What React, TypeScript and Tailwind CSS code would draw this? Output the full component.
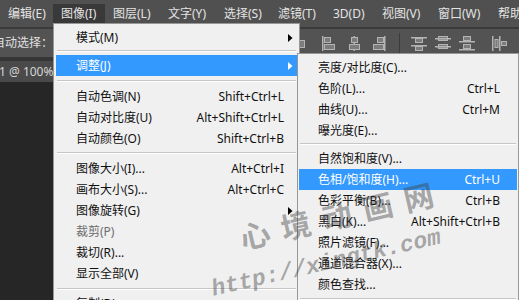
type Item =
  | { sep: string }
  | { t: string; k?: string; sub?: boolean; hi?: boolean; off?: boolean };

const font = "font-['Noto_Sans','Noto_Sans_CJK_SC',sans-serif]";

const topMenu = [
  { t: "编辑(E)", w: "w-[53px]" },
  { t: "图像(I)", w: "w-[52px]", on: true },
  { t: "图层(L)", w: "w-[55px]" },
  { t: "文字(Y)", w: "w-[56px]" },
  { t: "选择(S)", w: "w-[54px]" },
  { t: "滤镜(T)", w: "w-[55px]" },
  { t: "3D(D)", w: "w-[49px]" },
  { t: "视图(V)", w: "w-[56px]" },
  { t: "窗口(W)", w: "w-[60px]" },
  { t: "帮助(H)", w: "w-[60px]" },
];

const mainItems: Item[] = [
  { t: "模式(M)", sub: true },
  { sep: "h-[7px] pt-[2px]" },
  { t: "调整(J)", sub: true, hi: true },
  { sep: "h-[10px] pt-[4px]" },
  { t: "自动色调(N)", k: "Shift+Ctrl+L" },
  { t: "自动对比度(U)", k: "Alt+Shift+Ctrl+L" },
  { t: "自动颜色(O)", k: "Shift+Ctrl+B" },
  { sep: "h-[9px] pt-[3px]" },
  { t: "图像大小(I)...", k: "Alt+Ctrl+I" },
  { t: "画布大小(S)...", k: "Alt+Ctrl+C" },
  { t: "图像旋转(G)", sub: true },
  { t: "裁剪(P)", off: true },
  { t: "裁切(R)..." },
  { t: "显示全部(V)" },
  { sep: "h-[9px] pt-[4px]" },
  { t: "复制(D)..." },
];

const subItems: Item[] = [
  { t: "亮度/对比度(C)..." },
  { t: "色阶(L)...", k: "Ctrl+L" },
  { t: "曲线(U)...", k: "Ctrl+M" },
  { t: "曝光度(E)..." },
  { sep: "h-[7px] pt-[2px]" },
  { t: "自然饱和度(V)..." },
  { t: "色相/饱和度(H)...", k: "Ctrl+U", hi: true },
  { t: "色彩平衡(B)...", k: "Ctrl+B" },
  { t: "黑白(K)...", k: "Alt+Shift+Ctrl+B" },
  { t: "照片滤镜(F)..." },
  { t: "通道混合器(X)..." },
  { t: "颜色查找..." },
  { sep: "h-[9px] pt-[3px]" },
];

function Arrow({ white }: { white?: boolean }) {
  return (
    <svg width="5" height="8" viewBox="0 0 5 8">
      <polygon points="0,0 4.5,4 0,8" fill={white ? "#ffffff" : "#000000"} />
    </svg>
  );
}

function MenuRows({ items, pl, pr }: { items: Item[]; pl: string; pr: string }) {
  return (
    <>
      {items.map((it, i) =>
        "sep" in it ? (
          <div key={i} className={it.sep + " mx-[1px]"}>
            <div className="h-px bg-[#c6c6c6]" />
            <div className="h-px bg-white" />
          </div>
        ) : (
          <div
            key={i}
            className={
              "flex h-[21px] items-center leading-[21px] " + pl + " " + pr + " " +
              (it.hi ? "bg-[#3399ff] text-white" : it.off ? "text-[#6d6d6d]" : "text-[#111]")
            }
          >
            <span className="flex-1 whitespace-nowrap">{it.t}</span>
            {it.k && <span className="whitespace-nowrap">{it.k}</span>}
            <span className="flex w-[12px] justify-center">{it.sub && <Arrow white={it.hi} />}</span>
          </div>
        )
      )}
    </>
  );
}

function AlignIcon({ kind }: { kind: number }) {
  const ln = "#b4b4b4";
  const bx = "#7c7c7c";
  return (
    <svg width="17" height="17" viewBox="0 0 17 17">
      {kind === 0 && (
        <g>
          <rect x="1" y="1" width="1.5" height="15" fill={ln} />
          <rect x="4.5" y="5.5" width="8" height="7" fill={bx} stroke={ln} />
        </g>
      )}
      {kind === 1 && (
        <g>
          <rect x="1" y="1" width="1.5" height="15" fill={ln} />
          <rect x="3.5" y="2.5" width="6" height="5" fill={bx} stroke={ln} />
          <rect x="3.5" y="9.5" width="10" height="5" fill={bx} stroke={ln} />
        </g>
      )}
      {kind === 2 && (
        <g>
          <rect x="7.5" y="1" width="1.5" height="15" fill={ln} />
          <rect x="5.5" y="2.5" width="6" height="5" fill={bx} stroke={ln} />
          <rect x="3.5" y="9.5" width="10" height="5" fill={bx} stroke={ln} />
        </g>
      )}
      {kind === 3 && (
        <g>
          <rect x="14" y="1" width="1.5" height="15" fill={ln} />
          <rect x="7.5" y="2.5" width="6" height="5" fill={bx} stroke={ln} />
          <rect x="3.5" y="9.5" width="10" height="5" fill={bx} stroke={ln} />
        </g>
      )}
      {kind === 4 && (
        <g>
          <rect x="1" y="2" width="16" height="1.5" fill={ln} />
          <rect x="5.5" y="3.5" width="7" height="4" fill={bx} stroke={ln} />
          <rect x="1" y="10" width="16" height="1.5" fill={ln} />
          <rect x="5.5" y="11.5" width="7" height="4" fill={bx} stroke={ln} />
        </g>
      )}
      {kind === 5 && (
        <g>
          <rect x="4.5" y="1.5" width="9" height="4" fill={bx} stroke={ln} />
          <rect x="1" y="3" width="16" height="1.5" fill={ln} />
          <rect x="4.5" y="9.5" width="9" height="4" fill={bx} stroke={ln} />
          <rect x="1" y="11" width="16" height="1.5" fill={ln} />
        </g>
      )}
      {kind === 6 && (
        <g>
          <rect x="5.5" y="1.5" width="7" height="4" fill={bx} stroke={ln} />
          <rect x="1" y="6" width="16" height="1.5" fill={ln} />
          <rect x="5.5" y="9.5" width="7" height="4" fill={bx} stroke={ln} />
          <rect x="1" y="14" width="16" height="1.5" fill={ln} />
        </g>
      )}
      {kind === 7 && (
        <g>
          <rect x="1" y="1" width="1.5" height="15" fill={ln} />
          <rect x="4" y="4.5" width="3" height="8" fill={bx} stroke={ln} />
          <rect x="8" y="1" width="1.5" height="15" fill={ln} />
          <rect x="10.5" y="6.5" width="5" height="4" fill={bx} stroke={ln} />
        </g>
      )}
    </svg>
  );
}

export default function App() {
  return (
    <div className={"relative h-[300px] w-[519px] overflow-hidden bg-[#262626] text-[12px] " + font}>
      {/* menu bar */}
      <div className="flex h-[27px] bg-[#505050] text-[#e4e4e4]">
        {topMenu.map((m) => (
          <div key={m.t} className={"shrink-0 pt-[4px] " + m.w}>
            <div className={"h-[19px] whitespace-nowrap pl-[8px] leading-[19px] " + (m.on ? "bg-[#393939]" : "")}>{m.t}</div>
          </div>
        ))}
      </div>
      <div className="h-[2px] bg-[#3a3a3a]" />

      {/* options bar */}
      <div className="flex h-[28px] items-center bg-[#535353] text-[#e0e0e0]">
        <span className="-ml-[7px] w-[305px] shrink-0 whitespace-nowrap">自动选择：</span>
        <div className="flex items-center">
          <div className="-ml-[6px]"><AlignIcon kind={0} /></div>
          <div className="ml-[12px]"><AlignIcon kind={1} /></div>
          <div className="ml-[8px]"><AlignIcon kind={2} /></div>
          <div className="ml-[7px]"><AlignIcon kind={3} /></div>
          <div className="ml-[12px] h-[20px] w-px bg-[#3c3c3c]" />
          <div className="ml-[10px]"><AlignIcon kind={4} /></div>
          <div className="ml-[7px]"><AlignIcon kind={5} /></div>
          <div className="ml-[7px]"><AlignIcon kind={6} /></div>
          <div className="ml-[16px]"><AlignIcon kind={7} /></div>
        </div>
      </div>
      <div className="h-[4px] bg-[#363636]" />

      {/* document tab */}
      <div className="flex h-[21px]">
        <div className="-ml-[1px] whitespace-nowrap bg-[#4a4a4a] pr-[6px] leading-[21px] text-[#d6d6d6]">1 @ 100%</div>
      </div>

      {/* image menu */}
      <div className="absolute left-[53px] top-[23px] w-[247px] border border-[#979797] bg-[#f0f0f0] px-[2px] pt-[3px]">
        <MenuRows items={mainItems} pl="pl-[20px]" pr="pr-[1px]" />
      </div>

      {/* adjustments submenu */}
      <div className="absolute left-[297px] top-[53px] w-[222px] border border-[#979797] bg-[#f0f0f0] px-[1px] pt-[3px]">
        <MenuRows items={subItems} pl="pl-[19px]" pr="pr-[5px]" />
      </div>

      {/* watermark */}
      <div className="pointer-events-none absolute left-[240px] top-[222px] origin-[0_50%] -rotate-[13deg] whitespace-nowrap text-[30px] font-bold leading-none tracking-[12px] text-[rgba(60,60,60,0.42)] font-['Noto_Sans_CJK_SC',sans-serif]">
        心境动画网
      </div>
      <div className="pointer-events-none absolute left-[212px] top-[279px] origin-[0_50%] -rotate-[13deg] whitespace-nowrap text-[23px] font-bold italic leading-none text-[rgba(60,60,60,0.42)] font-['Liberation_Mono',monospace]">
        http://xingtk.com
      </div>
    </div>
  );
}
